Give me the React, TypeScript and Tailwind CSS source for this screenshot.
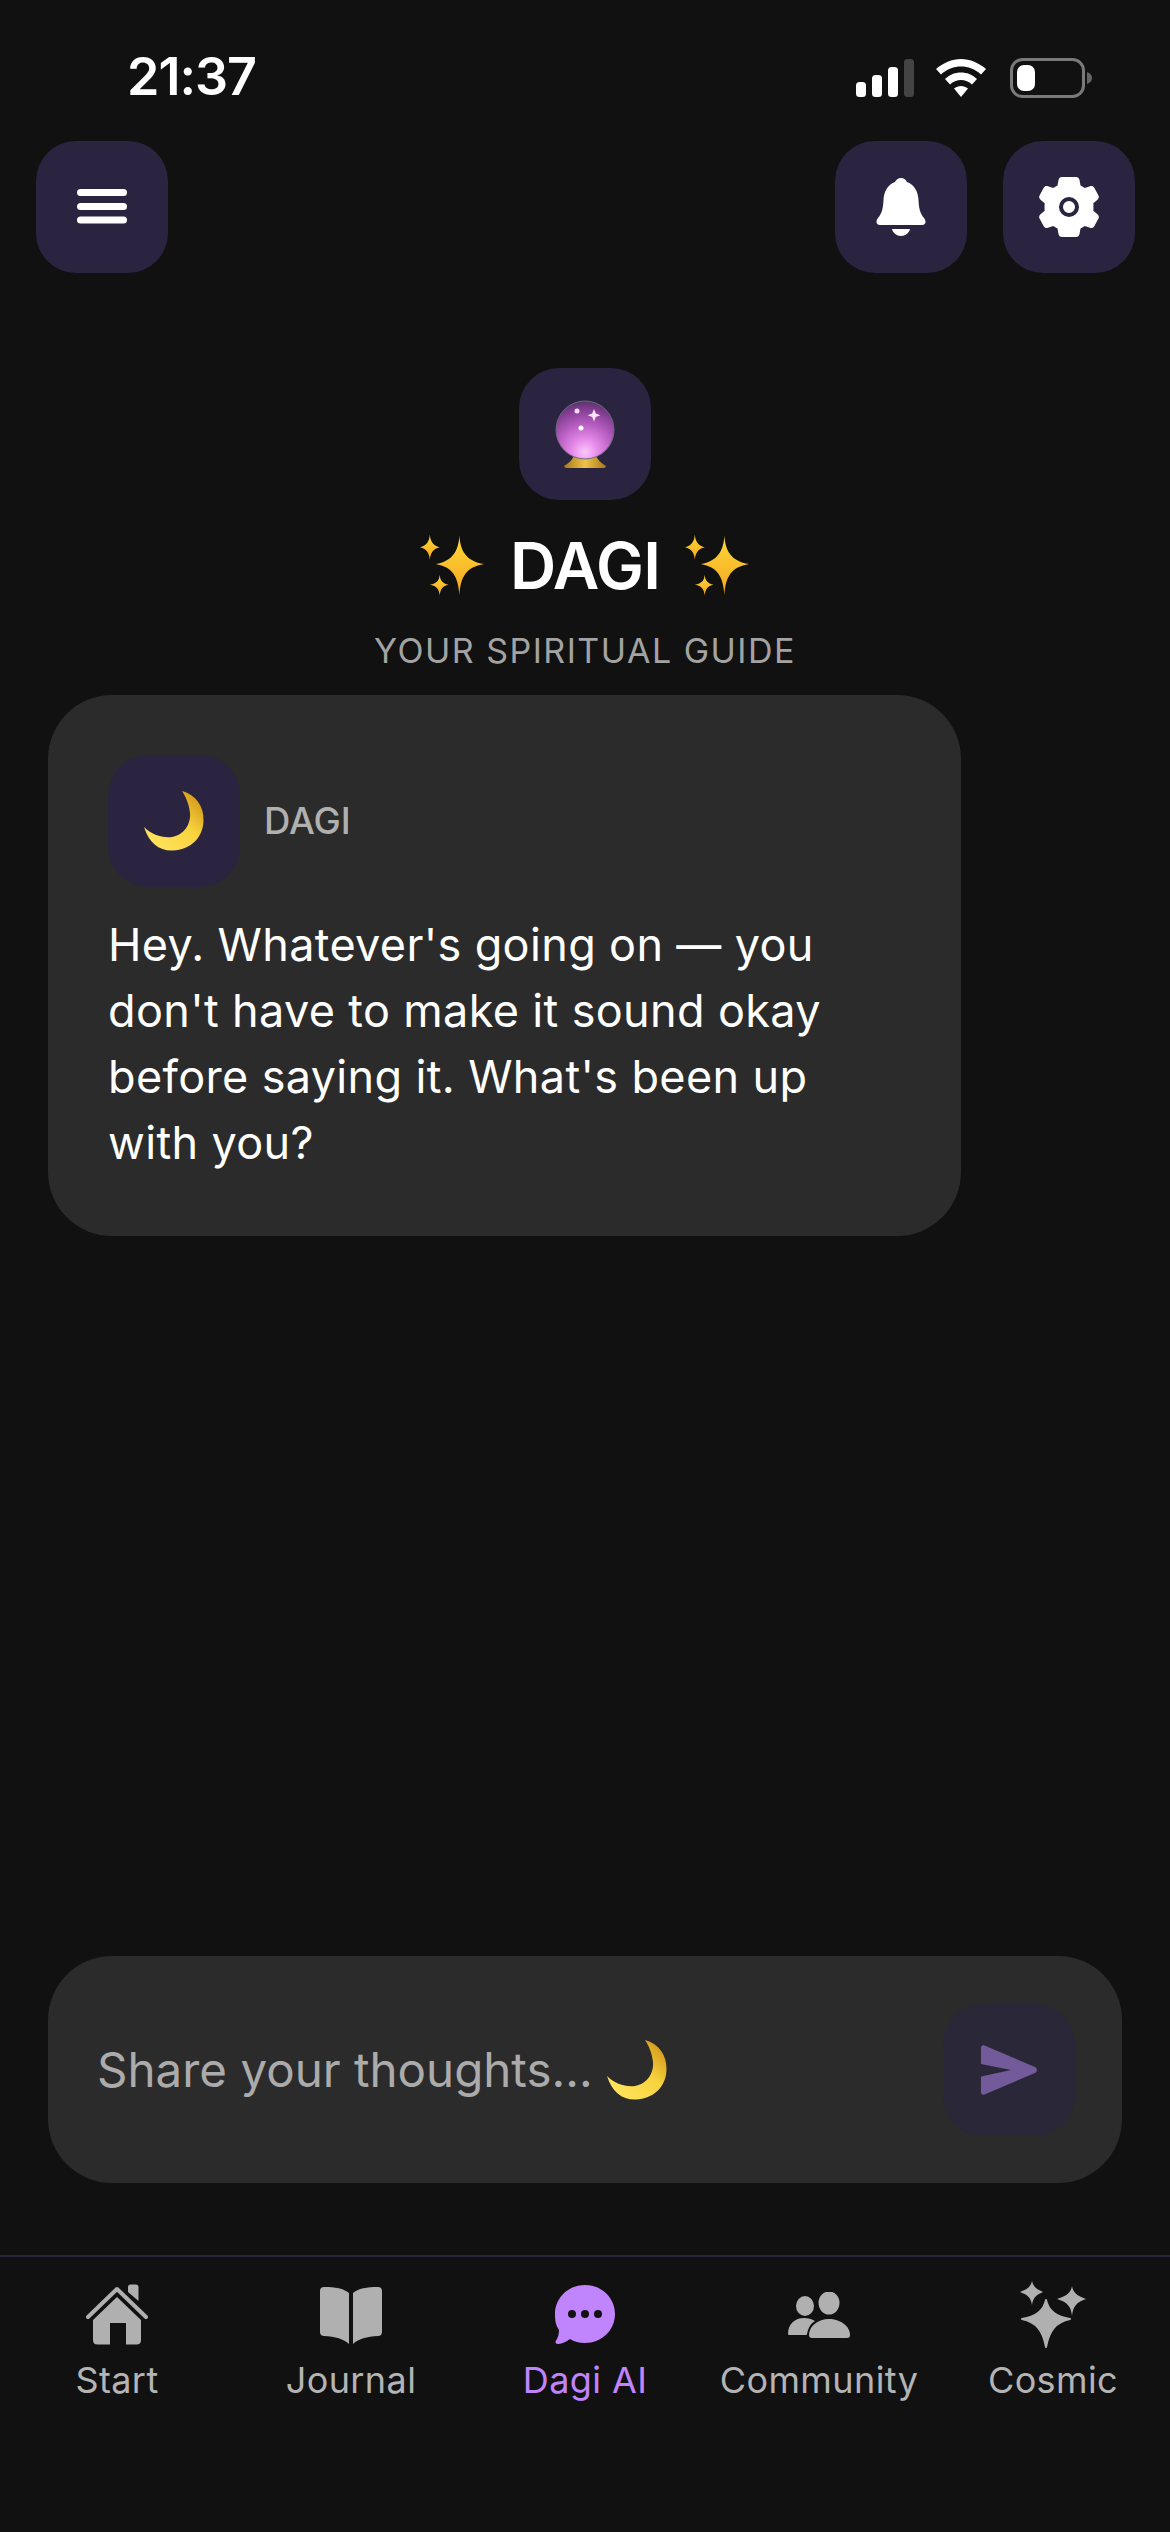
const Sparkles = () => (
  <svg width="65" height="64" viewBox="0 0 66 64">
    <defs>
      <linearGradient id="spark" x1="0" y1="0" x2="0" y2="1">
        <stop offset="0" stopColor="#fdd835" />
        <stop offset="1" stopColor="#f5a623" />
      </linearGradient>
    </defs>
    <path d="M40 1C41 17 47 27 65 30C47 33 41 43 40 62C39 43 33 33 16 30C33 27 39 17 40 1Z" fill="url(#spark)" />
    <path d="M10 0C10.600 7 13 11 20 13C13 15 10.600 19 10 26C9.400 19 7 15 0 13C7 11 9.400 7 10 0Z" fill="url(#spark)" />
    <path d="M20 41C20.500 47 23 50 29 51C23 52 20.500 56 20 62C19.500 56 17 52 10 51C17 50 19.500 47 20 41Z" fill="url(#spark)" />
  </svg>
);

const Moon = ({ size = 60 }: { size?: number }) => (
  <svg width={size} height={size} viewBox="0 0 60 60">
    <defs>
      <linearGradient id="moon" x1="0.2" y1="0.9" x2="0.9" y2="0.2">
        <stop offset="0" stopColor="#ffe25a" />
        <stop offset="0.6" stopColor="#f8d33e" />
        <stop offset="1" stopColor="#d9a21f" />
      </linearGradient>
    </defs>
    <path d="M38 0C52 4 60 15 59.500 30C59 47 46 59 29 59.500C15 60 5 52 0 36C8 44 18 47 28 46C40 44 47 33 46 22C45 13 42 6 38 0Z" fill="url(#moon)" />
  </svg>
);

const CrystalBall = () => (
  <svg width="62" height="68" viewBox="0 0 62 68">
    <defs>
      <radialGradient id="ball" cx="0.5" cy="0.88" r="0.9">
        <stop offset="0" stopColor="#fbc8fb" />
        <stop offset="0.25" stopColor="#e58ae8" />
        <stop offset="0.55" stopColor="#b55cc0" />
        <stop offset="0.85" stopColor="#7d3a8c" />
        <stop offset="1" stopColor="#4b3560" />
      </radialGradient>
      <linearGradient id="base" x1="0" y1="0" x2="1" y2="0">
        <stop offset="0" stopColor="#a87a18" />
        <stop offset="0.5" stopColor="#eec24a" />
        <stop offset="1" stopColor="#a87a18" />
      </linearGradient>
    </defs>
    <path d="M20 56H42C44 60 47 63 52 66C52 67 51 68 49 68H13C11 68 10 67 10 66C15 63 18 60 20 56Z" fill="url(#base)" />
    <circle cx="31" cy="30" r="29" fill="url(#ball)" stroke="#6d6a80" strokeWidth="1" />
    <path d="M40 9l1.800 4.500 4.500 1.800-4.500 1.800-1.800 4.500-1.800-4.500-4.500-1.800 4.500-1.800Z" fill="#fbe3fb" />
    <circle cx="23" cy="11" r="2.500" fill="#fbd8fb" />
    <circle cx="27" cy="28" r="2.500" fill="#ffffff" />
  </svg>
);

const Signal = () => (
  <svg width="58" height="38" viewBox="0 0 58 38">
    <rect x="0" y="23" width="10" height="15" rx="3.500" fill="#fff" />
    <rect x="16" y="16" width="10" height="22" rx="3.500" fill="#fff" />
    <rect x="32" y="8" width="10" height="30" rx="3.500" fill="#fff" />
    <rect x="48" y="0" width="10" height="38" rx="3.500" fill="#444" />
  </svg>
);

const Wifi = () => (
  <svg width="50" height="38" viewBox="0 0 50 38">
    <path d="M25 0C34 0 43 4 50 10L45 15.500C39 10 32 7.500 25 7.500C18 7.500 11 10 5 15.500L0 10C7 4 16 0 25 0Z" fill="#fff" />
    <path d="M25 13.500C31 13.500 36 15.500 41 20L36 25.500C33 22.500 29 21 25 21C21 21 17 22.500 14 25.500L9 20C14 15.500 19 13.500 25 13.500Z" fill="#fff" />
    <path d="M25 27C27.500 27 30 28 32 29.500L25 38L18 29.500C20 28 22.500 27 25 27Z" fill="#fff" />
  </svg>
);

const Battery = () => (
  <svg width="82" height="40" viewBox="0 0 82 40">
    <rect x="1.500" y="1.500" width="72" height="37" rx="11" fill="none" stroke="#7a7a7a" strokeWidth="3" />
    <rect x="7" y="7" width="18" height="26" rx="7" fill="#fff" />
    <path d="M77 14C80 15 82 17 82 20C82 23 80 25 77 26Z" fill="#666" />
  </svg>
);

const Menu = () => (
  <svg width="50" height="36" viewBox="0 0 50 36">
    <rect x="0" y="0" width="50" height="7" rx="3.500" fill="#fff" />
    <rect x="0" y="14" width="50" height="7" rx="3.500" fill="#fff" />
    <rect x="0" y="27.500" width="50" height="7" rx="3.500" fill="#fff" />
  </svg>
);

const Bell = () => (
  <svg width="50" height="58" viewBox="0 0 50 58">
    <path d="M25 0C28 0 30 2 31 4C39 7 42 14 42.500 22C43 31 44 35 48 40C50.500 43 50 47 46 47H4C0 47 -0.500 43 2 40C6 35 7 31 7.500 22C8 14 11 7 19 4C20 2 22 0 25 0Z" fill="#fff" />
    <path d="M16 51H34C33 55 29.500 58 25 58C20.500 58 17 55 16 51Z" fill="#fff" />
  </svg>
);

const Gear = () => (
  <svg width="60" height="60" viewBox="0 0 60 60">
    <path
      fillRule="evenodd"
      d="M23 0H37C39 0 40 1 40.500 3L41.500 8.500C43 9.200 44.500 10 45.800 11L51 9.200C53 8.600 54.300 9.200 55.300 10.800L59.300 18.200C60.300 20 60 21.300 58.500 22.700L54.300 26.300C54.500 28.300 54.500 31.700 54.300 33.700L58.500 37.300C60 38.700 60.300 40 59.300 41.800L55.300 49.200C54.300 50.800 53 51.400 51 50.800L45.800 49C44.500 50 43 50.800 41.500 51.500L40.500 57C40 59 39 60 37 60H23C21 60 20 59 19.500 57L18.500 51.500C17 50.800 15.500 50 14.200 49L9 50.800C7 51.400 5.700 50.800 4.700 49.200L0.700 41.800C-0.300 40 0 38.700 1.500 37.300L5.700 33.700C5.500 31.700 5.500 28.300 5.700 26.300L1.500 22.700C0 21.300 -0.300 20 0.700 18.200L4.700 10.800C5.700 9.200 7 8.600 9 9.200L14.200 11C15.500 10 17 9.200 18.500 8.500L19.500 3C20 1 21 0 23 0ZM30 20A10 10 0 1 0 30 40A10 10 0 1 0 30 20ZM30 24A6 6 0 1 1 30 36A6 6 0 1 1 30 24Z"
      fill="#fff"
    />
  </svg>
);

const Send = () => (
  <svg width="56" height="50" viewBox="0 0 56 50">
    <path d="M0 3C0 1 1.500 -0.300 3.500 0.500L54 22C56.500 23.200 56.500 26.800 54 28L3.500 49.500C1.500 50.300 0 49 0 47V31.500L30 25L0 19Z" fill="#735a9a" />
  </svg>
);

const Home = () => (
  <svg width="62" height="62" viewBox="0 0 62 62" fill="#b0b0b0">
    <path d="M42 8V3C42 1.500 43 0.500 44.500 0.500H50C51.500 0.500 52.500 1.500 52.500 3V17Z" />
    <path d="M2 33L31 5L60 33" fill="none" stroke="#b0b0b0" strokeWidth="4" strokeLinecap="round" strokeLinejoin="round" />
    <path d="M31 13L55 36V56C55 59 53.500 60.500 50.500 60.500H40V39H24V60.500H11.500C8.500 60.500 7 59 7 56V36Z" />
  </svg>
);

const Book = () => (
  <svg width="62" height="58" viewBox="0 0 62 58" fill="#b0b0b0">
    <path d="M4 1C15 1 24 2.500 29 7V58C24 53 15 50.500 4 50C1.500 50 0 48.500 0 46V5C0 2.500 1.500 1 4 1Z" />
    <path d="M58 1C47 1 38 2.500 33 7V58C38 53 47 50.500 58 50C60.500 50 62 48.500 62 46V5C62 2.500 60.500 1 58 1Z" />
  </svg>
);

const Chat = () => (
  <svg width="60" height="60" viewBox="0 0 60 60">
    <path d="M30 0C47 0 60 13 60 29C60 45 47 58 30 58C24 58 19 56.500 15 54C11 57 7 58.500 3.500 59C1 59.300 -0.300 57.500 1 55.500C3 52.500 4 49.500 4 45C0.500 40 0 35 0 29C0 13 13 0 30 0Z" fill="#c084fc" />
    <circle cx="17" cy="29" r="4" fill="#111" />
    <circle cx="30" cy="29" r="4" fill="#111" />
    <circle cx="43" cy="29" r="4" fill="#111" />
  </svg>
);

const People = () => (
  <svg width="62" height="46" viewBox="0 0 62 46" fill="#b0b0b0">
    <ellipse cx="17" cy="14" rx="9" ry="10" />
    <ellipse cx="41" cy="11" rx="10.500" ry="11.500" />
    <path d="M0 42C0 32 7 26 16 26C20 26 24 27 27 29C22 32 20 37 19 42C19 43 18 43 17 43H2C1 43 0 43 0 42Z" />
    <path d="M21 43C21 34 30 27 41 27C52 27 62 34 62 43C62 45 61 46 59 46H24C22 46 21 45 21 43Z" />
  </svg>
);

const Stars = () => (
  <svg width="66" height="68" viewBox="0 0 66 68" fill="#b0b0b0">
    <path d="M26 19C28 29 36 36 50 38C36 41 29 49 26 66C23 49 16 41 2 38C16 36 24 29 26 19Z" strokeLinejoin="round" stroke="#b0b0b0" strokeWidth="2" />
    <path d="M12 0C13 5 16 8 23 11C16 14 13 17 12 24C11 17 8 14 0 11C8 8 11 5 12 0Z" />
    <path d="M52 5C53 11 57 15 66 18C57 21 53 25 52 35C51 25 47 21 37 18C47 15 51 11 52 5Z" />
  </svg>
);

const navItems = [
  { label: "Start", icon: <Home /> },
  { label: "Journal", icon: <Book /> },
  { label: "Dagi AI", icon: <Chat />, active: true },
  { label: "Community", icon: <People /> },
  { label: "Cosmic", icon: <Stars /> },
];

export default function App() {
  return (
    <div className="flex h-[2532px] w-[1170px] flex-col overflow-hidden bg-[#111111] font-['Inter',sans-serif] text-white">
      {/* status bar */}
      <div className="flex h-[141px] items-start justify-between pl-[127px] pr-[78px] pt-[47px]">
        <span className="text-[52px] leading-[60px] font-semibold tracking-[-1px]">21:37</span>
        <div className="flex items-center gap-[22px] pt-[11px]">
          <Signal />
          <Wifi />
          <div className="ml-[2px]">
            <Battery />
          </div>
        </div>
      </div>

      {/* top actions */}
      <div className="flex justify-between pl-[36px] pr-[35px]">
        <button className="flex h-[132px] w-[132px] items-center justify-center rounded-[40px] bg-[#2a2440]">
          <Menu />
        </button>
        <div className="flex gap-[36px]">
          <button className="flex h-[132px] w-[132px] items-center justify-center rounded-[40px] bg-[#2a2440]">
            <Bell />
          </button>
          <button className="flex h-[132px] w-[132px] items-center justify-center rounded-[40px] bg-[#2a2440]">
            <Gear />
          </button>
        </div>
      </div>

      {/* heading */}
      <div className="mt-[95px] flex flex-col items-center">
        <div className="flex h-[132px] w-[132px] items-center justify-center rounded-[40px] bg-[#2a2440]">
          <CrystalBall />
        </div>
        <div className="mt-[28px] flex h-[76px] items-center gap-[25px]">
          <Sparkles />
          <h1 className="text-[64px] leading-[76px] font-semibold tracking-[-0.8px]">DAGI</h1>
          <Sparkles />
        </div>
        <p className="mt-[25px] text-[34px] leading-[44px] tracking-[1.5px] text-[#a3a3a3]">YOUR SPIRITUAL GUIDE</p>
      </div>

      {/* message */}
      <div className="mx-[48px] mt-[22px] w-[913px] rounded-[64px] bg-[#2b2b2b] pb-[60px] pl-[60px] pr-[90px] pt-[60px]">
        <div className="flex items-center gap-[24px]">
          <div className="flex h-[132px] w-[132px] items-center justify-center rounded-[40px] bg-[#2a2440]">
            <Moon />
          </div>
          <span className="text-[36.5px] font-medium text-[#b0b0b0]">DAGI</span>
        </div>
        <p className="mt-[25px] text-[45px] leading-[66px] tracking-[0.35px] text-white">
          Hey. Whatever's going on — you don't have to make it sound okay before saying it. What's been up with you?
        </p>
      </div>

      <div className="flex-1" />

      {/* composer */}
      <div className="mx-[48px] flex h-[227px] w-[1074px] items-center justify-between rounded-[64px] bg-[#2b2b2b] pl-[49px] pr-[47px]">
        <div className="flex items-center gap-[14px] text-[47.5px] text-[#ababab]">
          <span>Share your thoughts...</span>
          <Moon />
        </div>
        <button className="flex h-[132px] w-[132px] items-center justify-center rounded-[40px] bg-[#2a2738]">
          <Send />
        </button>
      </div>

      {/* bottom nav */}
      <nav className="mt-[72px] flex h-[277px] border-t-2 border-[#2a2440]">
        {navItems.map((item) => (
          <div key={item.label} className="flex w-[234px] flex-col items-center">
            <div className="mt-[22px] flex h-[72px] items-center justify-center">{item.icon}</div>
            <span className={`mt-[7px] text-[36px] leading-[44px] tracking-[0.4px] ${item.active ? "text-[#c084fc]" : "text-[#b4b4b4]"}`}>{item.label}</span>
          </div>
        ))}
      </nav>
    </div>
  );
}
